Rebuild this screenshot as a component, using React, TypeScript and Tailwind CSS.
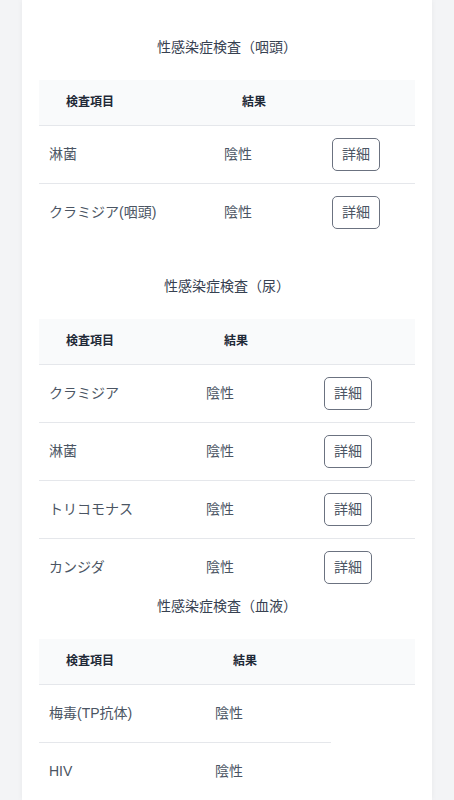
type Row = { name: string; result: string; detail?: boolean }

type Section = {
  title: string
  cols: [string, string, string]
  rows: Row[]
  last?: boolean
}

const sections: Section[] = [
  {
    title: "性感染症検査（咽頭）",
    cols: ["w-[175px]", "w-[108px]", "w-[93px]"],
    rows: [
      { name: "淋菌", result: "陰性", detail: true },
      { name: "クラミジア(咽頭)", result: "陰性", detail: true },
    ],
  },
  {
    title: "性感染症検査（尿）",
    cols: ["w-[157px]", "w-[118px]", "w-[101px]"],
    rows: [
      { name: "クラミジア", result: "陰性", detail: true },
      { name: "淋菌", result: "陰性", detail: true },
      { name: "トリコモナス", result: "陰性", detail: true },
      { name: "カンジダ", result: "陰性", detail: true },
    ],
    last: true,
  },
  {
    title: "性感染症検査（血液）",
    cols: ["w-[166px]", "w-[126px]", "w-[84px]"],
    rows: [
      { name: "梅毒(TP抗体)", result: "陰性" },
      { name: "HIV", result: "陰性" },
    ],
  },
]

const ResultTable = ({ section }: { section: Section }) => {
  return (
    <div className={section.last ? "" : "mb-[35px]"}>
      <h2 className="mb-[23px] text-center text-[14px] leading-5 text-[#374151]">
        {section.title}
      </h2>
      <table className="w-full table-fixed border-collapse">
        <colgroup>
          <col className={section.cols[0]} />
          <col className={section.cols[1]} />
          <col className={section.cols[2]} />
        </colgroup>
        <thead>
          <tr className="h-[45px] border-b border-[#e5e7eb] bg-[#f9fafb]">
            <th className="pl-[27px] text-left text-[12px] font-bold text-[#1f2937]">
              検査項目
            </th>
            <th className="pl-[28px] text-left text-[12px] font-bold text-[#1f2937]">
              結果
            </th>
            <th />
          </tr>
        </thead>
        <tbody>
          {section.rows.map((row, i) => {
            const border = i < section.rows.length - 1 ? "border-b border-[#e5e7eb]" : ""
            return (
              <tr key={row.name} className="h-[58px]">
                <td className={`pl-[10px] text-[14px] text-[#4b5563] ${border}`}>
                  {row.name}
                </td>
                <td className={`pl-[10px] text-[14px] text-[#4b5563] ${border}`}>
                  {row.result}
                </td>
                {row.detail && (
                  <td className={`pl-[10px] ${border}`}>
                    <button
                      type="button"
                      className="h-[33px] w-[48px] rounded-[5px] border border-[#6b7280] text-[14px] text-[#4b5563]"
                    >
                      詳細
                    </button>
                  </td>
                )}
              </tr>
            )
          })}
        </tbody>
      </table>
    </div>
  )
}

const App = () => {
  return (
    <div
      className="min-h-screen w-full bg-[#f3f4f6]"
      style={{ fontFamily: '"Liberation Sans", "Noto Sans CJK JP", sans-serif' }}
    >
      <div className="mx-[22px] min-h-[800px] bg-white px-[17px] pt-[37px] shadow-[0_0_6px_rgba(0,0,0,0.05)]">
        {sections.map(s => (
          <ResultTable key={s.title} section={s} />
        ))}
      </div>
    </div>
  )
}

export default App
